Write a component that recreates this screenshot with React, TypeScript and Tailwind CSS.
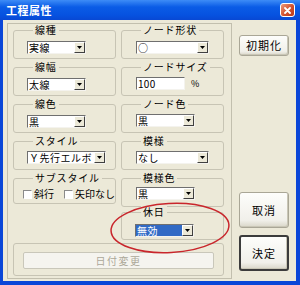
import React from "react";

const Arrow = () => (
  <svg width="5" height="3" viewBox="0 0 5 3">
    <path d="M0 0H5L2.5 3Z" fill="#000" />
  </svg>
);

const Sel = ({ w, text, hl }: { w: string; text: string; hl?: boolean }) => (
  <div
    className={`flex h-[13px] ${w} bg-white border border-t-[#6f6f6f] border-l-[#6f6f6f] border-r-[#f4f3ee] border-b-[#f4f3ee]`}
  >
    <div
      className={`flex-1 flex items-center pl-[1px] text-[10px] leading-[11px] tracking-[0.5px] whitespace-nowrap ${
        hl ? "bg-[#316AC5] text-white" : "text-black"
      }`}
    >
      {text}
    </div>
    <div className="w-[11px] h-full bg-[#ECE9D8] border border-t-[#ffffff] border-l-[#ffffff] border-r-[#404040] border-b-[#404040] flex items-center justify-center">
      <Arrow />
    </div>
  </div>
);

const Group = ({
  label,
  className,
  children,
}: {
  label: string;
  className: string;
  children?: React.ReactNode;
}) => (
  <div className={`relative border border-[#c7c4b4] rounded-[3px] ${className}`}>
    <span className="absolute -top-[7px] left-[19px] bg-[#ECE9D8] px-[2px] text-[10px] leading-[12px] tracking-[0.8px] text-black whitespace-nowrap">
      {label}
    </span>
    {children}
  </div>
);

const Check = ({ label }: { label: string }) => (
  <div className="flex items-center gap-[2px] whitespace-nowrap">
    <div className="w-[9px] h-[9px] bg-white border border-t-[#8a8a8a] border-l-[#8a8a8a] border-r-[#ffffff] border-b-[#ffffff]" />
    <span className="text-[10px] leading-[12px] tracking-[0px]">{label}</span>
  </div>
);

const Btn = ({ label, className, def }: { label: string; className: string; def?: boolean }) => (
  <div
    className={`flex items-center justify-center rounded-[3px] ${className} ${
      def ? "border-2 border-[#3c3c3c]" : "border border-[#a9a696]"
    } bg-[linear-gradient(#fdfdfb,#f1f0ea_80%,#d9d6c8)] shadow-[inset_-1px_-1px_0_#c9c6b6]`}
  >
    <span className="text-[11px] leading-[13px] tracking-[1px] text-black">{label}</span>
  </div>
);

export default function App() {
  return (
    <div className="relative w-[300px] h-[285px] flex flex-col bg-[#0a46d8] font-['Noto_Sans_CJK_JP',sans-serif] overflow-hidden">
      {/* title bar */}
      <div className="h-[20px] flex items-center justify-between pl-[6px] pr-[5px] bg-[linear-gradient(#3d8cf7,#0a5ce6_35%,#0652e0_75%,#0848d4)]">
        <span className="text-white font-bold text-[11px] leading-[13px] tracking-[0.5px]">工程属性</span>
        <div className="w-[15px] h-[14px] rounded-[3px] border border-white bg-[linear-gradient(135deg,#ec9a7c,#d2502d_55%,#b8391a)] flex items-center justify-center">
          <svg width="7" height="7" viewBox="0 0 7 7">
            <path d="M1 1L6 6M6 1L1 6" stroke="#fff" strokeWidth="1.8" strokeLinecap="round" />
          </svg>
        </div>
      </div>
      {/* body */}
      <div className="flex-1 ml-[3px] mr-[4px] mb-[4px] bg-[#ECE9D8] flex pl-[4px] pt-[3px]">
        <div className="w-[225px] h-[256px] border border-[#c2bfae] pl-[5px] pt-[6px] flex flex-col">
          <div className="grid grid-cols-[103px_103px] gap-x-[5px]">
            <div className="flex flex-col gap-[8px]">
              <Group label="線種" className="h-[29px] pl-[13px] pt-[10px]">
                <Sel w="w-[59px]" text="実線" />
              </Group>
              <Group label="線幅" className="h-[29px] pl-[13px] pt-[10px]">
                <Sel w="w-[59px]" text="太線" />
              </Group>
              <Group label="線色" className="h-[29px] pl-[13px] pt-[10px]">
                <Sel w="w-[59px]" text="黒" />
              </Group>
              <Group label="スタイル" className="h-[29px] pl-[13px] pt-[9px]">
                <Sel w="w-[79px]" text="Ｙ先行エルボ" />
              </Group>
              <Group label="サブスタイル" className="h-[26px] pl-[9px] pt-[9px]">
                <div className="flex items-center gap-[10px]">
                  <Check label="斜行" />
                  <Check label="矢印なし" />
                </div>
              </Group>
            </div>
            <div className="flex flex-col gap-[8px]">
              <Group label="ノード形状" className="h-[29px] pl-[14px] pt-[10px]">
                <Sel w="w-[73px]" text="○" />
              </Group>
              <Group label="ノードサイズ" className="h-[29px] pl-[14px] pt-[9px]">
                <div className="flex items-center gap-[6px]">
                  <div className="w-[49px] h-[13px] bg-white border border-t-[#6f6f6f] border-l-[#6f6f6f] border-r-[#f4f3ee] border-b-[#f4f3ee] flex items-center pl-[1px] text-[10px] leading-[11px] tracking-[0.3px]">
                    100
                  </div>
                  <span className="text-[9px] leading-[11px]">%</span>
                </div>
              </Group>
              <Group label="ノード色" className="h-[29px] pl-[14px] pt-[9px]">
                <Sel w="w-[59px]" text="黒" />
              </Group>
              <Group label="模様" className="h-[29px] pl-[14px] pt-[9px]">
                <Sel w="w-[73px]" text="なし" />
              </Group>
              <Group label="模様色" className="h-[29px] pl-[14px] pt-[8px]">
                <Sel w="w-[59px]" text="黒" />
              </Group>
              <Group label="休日" className="h-[28px] pl-[13px] pt-[11px] -mt-[3px]">
                <Sel w="w-[59px]" text="無効" hl />
              </Group>
            </div>
          </div>
          <div className="mt-[3px] w-[211px] h-[33px] border border-[#c7c4b4] rounded-[3px] pl-[9px] pt-[8px]">
            <div className="w-[191px] h-[17px] rounded-[2px] border border-[#c9c7ba] bg-[#f5f4ef] flex items-center justify-center">
              <span className="text-[10px] leading-[12px] tracking-[1.5px] text-[#aca899]">日付変更</span>
            </div>
          </div>
        </div>
        <div className="ml-[7px] flex flex-col pt-[12px] pb-[10px]">
          <Btn label="初期化" className="w-[50px] h-[21px]" />
          <div className="flex-1" />
          <Btn label="取消" className="w-[50px] h-[36px]" />
          <div className="h-[7px]" />
          <Btn label="決定" className="w-[50px] h-[36px]" def />
        </div>
      </div>
      <svg
        className="absolute left-0 top-0 pointer-events-none"
        width="300"
        height="285"
        viewBox="0 0 300 285"
      >
        <ellipse
          cx="170"
          cy="228"
          rx="59"
          ry="24.5"
          transform="rotate(-3 170 228)"
          fill="none"
          stroke="#c9262c"
          strokeWidth="1.5"
        />
      </svg>
    </div>
  );
}
